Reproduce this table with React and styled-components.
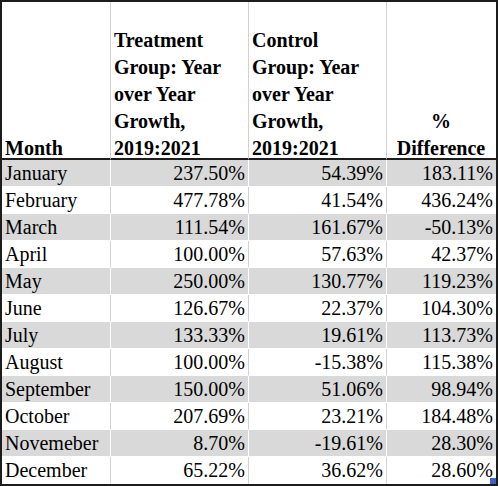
import styled, { createGlobalStyle } from "styled-components";

const rows = [
    ["January", "237.50%", "54.39%", "183.11%"],
    ["February", "477.78%", "41.54%", "436.24%"],
    ["March", "111.54%", "161.67%", "-50.13%"],
    ["April", "100.00%", "57.63%", "42.37%"],
    ["May", "250.00%", "130.77%", "119.23%"],
    ["June", "126.67%", "22.37%", "104.30%"],
    ["July", "133.33%", "19.61%", "113.73%"],
    ["August", "100.00%", "-15.38%", "115.38%"],
    ["September", "150.00%", "51.06%", "98.94%"],
    ["October", "207.69%", "23.21%", "184.48%"],
    ["Novemeber", "8.70%", "-19.61%", "28.30%"],
    ["December", "65.22%", "36.62%", "28.60%"],
];

export default function App(){
    return (
        <>
            <Global/>
            <Sheet>
                <HeadCell><span>Month</span></HeadCell>
                <HeadCell><span>Treatment Group: Year over Year Growth, 2019:2021</span></HeadCell>
                <HeadCell><span>Control Group: Year over Year Growth, 2019:2021</span></HeadCell>
                <HeadCell $centro $last><span>%<br/>Difference</span></HeadCell>
                {rows.map((r, i) => (
                    r.map((v, j) => (
                        <Cell key={i+"-"+j} $cinza={i % 2 === 0} $numero={j > 0} $last={j === 3}>
                            {v}
                        </Cell>
                    ))
                ))}
                <Alca/>
            </Sheet>
        </>
    )
}

const Global = createGlobalStyle`
    body{
        margin: 0;
        background: #FFFFFF;
    }
`

const Sheet = styled.div`
    position: relative;
    box-sizing: border-box;
    width: 498px;
    height: 486px;
    border: 2px solid #1c1c1c;
    display: grid;
    grid-template-columns: 109px 138px 138px 109px;
    grid-template-rows: 158px repeat(12, 27px);
    font-family: "Liberation Serif", "Times New Roman", serif;
    font-size: 20px;
    color: #000000;
`

const HeadCell = styled.div`
    display: flex;
    flex-direction: column;
    justify-content: flex-end;
    text-align: ${props => props.$centro ? "center" : "left"};
    padding: 0 4px 0 3px;
    font-weight: 700;
    line-height: 27px;
    border-right: ${props => props.$last ? "none" : "1px solid #d2d2d2"};
    border-bottom: 2px solid #1c1c1c;
    span{
        margin-bottom: -4px;
    }
`

const Cell = styled.div`
    box-sizing: border-box;
    background: ${props => props.$cinza ? "#D9D9D9" : "#FFFFFF"};
    border-right: ${props => props.$last ? "none" : props.$cinza ? "1px solid #FFFFFF" : "1px solid #d2d2d2"};
    border-bottom: 1px solid #FFFFFF;
    text-align: ${props => props.$numero ? "right" : "left"};
    padding: 0 3px 0 3px;
    line-height: 26px;
    white-space: nowrap;
`

const Alca = styled.div`
    position: absolute;
    right: 0;
    bottom: 0;
    width: 6px;
    height: 6px;
    background: #3f63c4;
`
